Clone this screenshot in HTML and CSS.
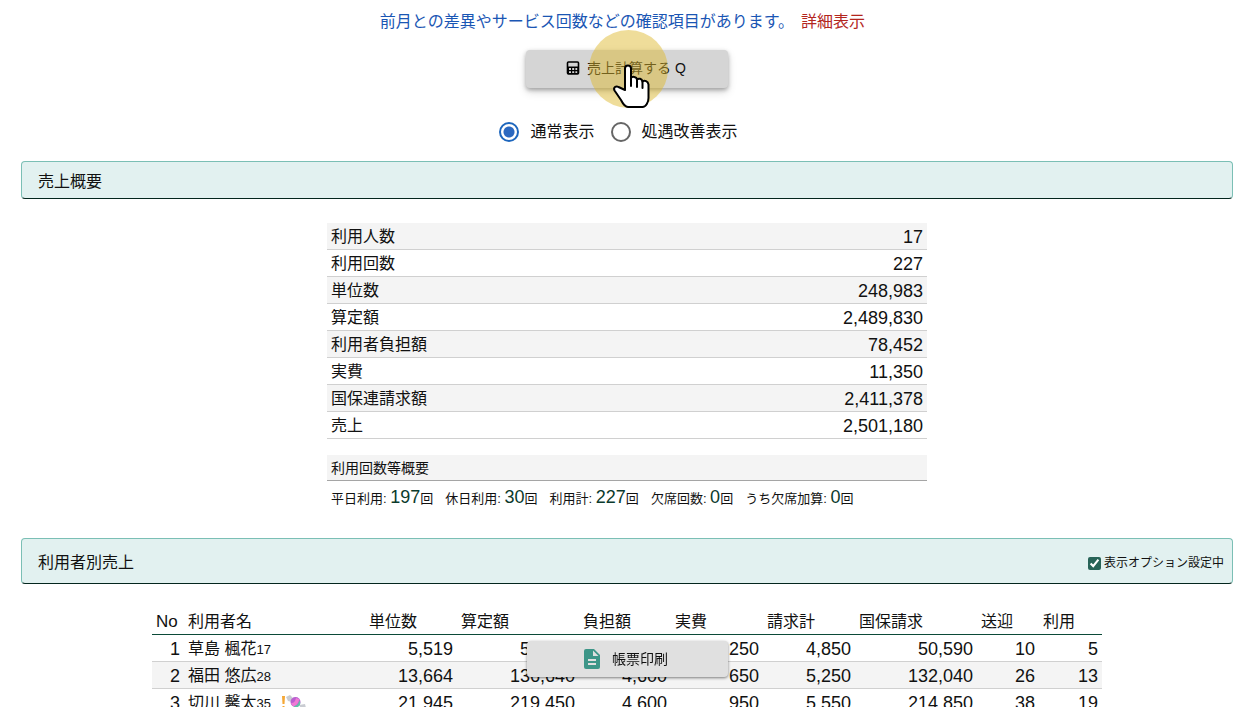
FILE: index.html
```html
<!DOCTYPE html>
<html lang="ja">
<head>
<meta charset="utf-8">
<meta name="viewport" content="width=device-width, initial-scale=1">
<title>売上計算</title>
<link rel="stylesheet" href="styles.css">
</head>
<body>
<main class="page">
  <div class="notice">
    <span class="notice-text">前月との差異やサービス回数などの確認項目があります。</span>
    <a class="notice-link" href="#detail">詳細表示</a>
  </div>

  <div class="calc">
    <button class="btn btn-calc" type="button">
      <svg class="icon-calc" viewBox="0 0 14 14" aria-hidden="true">
        <rect x="1.500" y="1" width="11" height="12" rx="1" fill="#d5d5d5" stroke="#000" stroke-width="1.600"/>
        <path d="M1.500 5.500h11V13h-11z" fill="#000"/>
        <path d="M3 7h2v2H3zM6.200 7h2v2h-2zM9.400 7h1.800v2H9.400zM3 10.300h2v1.700H3zM6.200 10.300h2V12h-2zM9.400 10.300h1.800V12H9.400z" fill="#d5d5d5"/>
      </svg>
      <span>売上計算する Q</span>
    </button>
    <span class="spot" aria-hidden="true"></span>
    <svg class="hand" viewBox="0 0 38 44" aria-hidden="true">
      <path d="M13 26V4.500a3 3 0 0 1 6 0V14c1-1.800 5.500-1.500 6 1.500 1.500-1.500 5-1 5.500 2 2-1.500 5.500-.5 6 3V34c0 4-2.500 9-6 9H16c-3 0-5-3-7-7L2.500 26.500c-1.500-3 1.500-5 4-3.500z" fill="#fff" stroke="#000" stroke-width="2" stroke-linejoin="round"/>
      <path d="M19 13v9M25 15v8M30.500 17v7" fill="none" stroke="#000" stroke-width="2" stroke-linecap="round"/>
    </svg>
  </div>

  <div class="modes" role="radiogroup" aria-label="表示">
    <label class="mode"><input class="radio" type="radio" name="mode" checked>通常表示</label>
    <label class="mode"><input class="radio" type="radio" name="mode">処遇改善表示</label>
  </div>

  <section>
    <header class="bar"><h2 class="bar-title">売上概要</h2></header>
    <table class="grid summary">
      <tbody>
        <tr><th scope="row">利用人数</th><td>17</td></tr>
        <tr><th scope="row">利用回数</th><td>227</td></tr>
        <tr><th scope="row">単位数</th><td>248,983</td></tr>
        <tr><th scope="row">算定額</th><td>2,489,830</td></tr>
        <tr><th scope="row">利用者負担額</th><td>78,452</td></tr>
        <tr><th scope="row">実費</th><td>11,350</td></tr>
        <tr><th scope="row">国保連請求額</th><td>2,411,378</td></tr>
        <tr><th scope="row">売上</th><td>2,501,180</td></tr>
      </tbody>
    </table>
    <div class="counts">
      <h3 class="counts-title">利用回数等概要</h3>
      <ul class="counts-list">
        <li>平日利用: <b>197</b>回</li>
        <li>休日利用: <b>30</b>回</li>
        <li>利用計: <b>227</b>回</li>
        <li>欠席回数: <b>0</b>回</li>
        <li>うち欠席加算: <b>0</b>回</li>
      </ul>
    </div>
  </section>

  <section>
    <header class="bar bar-tall">
      <h2 class="bar-title">利用者別売上</h2>
      <label class="option"><input class="check" type="checkbox" checked>表示オプション設定中</label>
    </header>
    <table class="grid users">
      <colgroup>
        <col class="c-no"><col class="c-name"><col class="c-mid"><col class="c-wide"><col class="c-mid"><col class="c-mid"><col class="c-mid"><col class="c-wide"><col class="c-small"><col class="c-last">
      </colgroup>
      <thead>
        <tr><th>No</th><th>利用者名</th><th>単位数</th><th>算定額</th><th>負担額</th><th>実費</th><th>請求計</th><th>国保請求</th><th>送迎</th><th>利用</th></tr>
      </thead>
      <tbody>
        <tr><td>1</td><td class="name">草島 楓花<small>17</small></td><td>5,519</td><td>55,190</td><td>4,600</td><td>250</td><td>4,850</td><td>50,590</td><td>10</td><td>5</td></tr>
        <tr><td>2</td><td class="name">福田 悠広<small>28</small></td><td>13,664</td><td>136,640</td><td>4,600</td><td>650</td><td>5,250</td><td>132,040</td><td>26</td><td>13</td></tr>
        <tr><td>3</td><td class="name">切川 馨太<small>35</small><svg class="candy" viewBox="0 0 26 16" aria-hidden="true">
          <path d="M1 2h3l-.5 8h-2zM1.500 12h2v2h-2z" fill="#f5a836"/>
          <path d="M5 3l4-2 3 3-1 4-4-1zM18 11l6-1 1 4-4 2z" fill="#c9ccd2"/>
          <circle cx="14.500" cy="8" r="5" fill="#b85fd0"/>
          <path d="M10 9c3 0 4-1 5-5l3 1c0 4-3 7-6 7.500z" fill="#f07bd5"/>
          <path d="M12.500 12.500c4-1 5-3 6-6 2 3 0 7-4 7z" fill="#5fc4a4"/>
        </svg></td><td>21,945</td><td>219,450</td><td>4,600</td><td>950</td><td>5,550</td><td>214,850</td><td>38</td><td>19</td></tr>
      </tbody>
    </table>
  </section>

  <button class="btn btn-print" type="button">
    <svg class="icon-doc" viewBox="0 0 16 20" aria-hidden="true">
      <path d="M2 0h8l6 6v12a2 2 0 0 1-2 2H2a2 2 0 0 1-2-2V2a2 2 0 0 1 2-2z" fill="#3d9688"/>
      <path d="M9 1.500V7h5.500zM4 10h8v2H4zM4 14h8v2H4z" fill="#e0e0e0"/>
    </svg>
    <span>帳票印刷</span>
  </button>
</main>
</body>
</html>
```
FILE: styles.css
```css
* { box-sizing: border-box; }

html { scrollbar-width: none; }

body {
  margin: 0;
  background: #fff;
  color: #111;
  font: 16px/24px "Liberation Sans", "Noto Sans CJK JP", sans-serif;
}

.page {
  padding: 10px 24px 0 21px;
}

.notice {
  display: flex;
  justify-content: center;
  gap: 7px;
  padding-right: 9px;
}
.notice-text { color: #1a56b4; }
.notice-link { color: #b3261e; text-decoration: none; }

.calc {
  position: relative;
  width: 202px;
  margin: 16px auto 0;
}

.btn {
  display: flex;
  align-items: center;
  justify-content: center;
  border: 0;
  border-radius: 4px;
  color: #111;
  font: inherit;
  font-size: 14px;
}
.btn-calc {
  width: 100%;
  height: 38px;
  gap: 7px;
  padding: 0 8px 3px 6px;
  background: #d5d5d5;
  box-shadow: 0 2px 4px rgba(0, 0, 0, .3), 0 4px 10px rgba(0, 0, 0, .14);
}
.icon-calc { width: 14px; height: 14px; }

.spot {
  position: absolute;
  top: -20px;
  left: 63px;
  width: 79px;
  height: 78px;
  border-radius: 50%;
  background: rgba(221, 184, 44, .48);
  pointer-events: none;
}
.hand {
  position: absolute;
  top: 14px;
  left: 86px;
  width: 38px;
  height: 44px;
  pointer-events: none;
}

.modes {
  display: flex;
  justify-content: center;
  gap: 16px;
  margin: 32px 0 17px;
  padding-right: 17px;
}
.mode {
  display: flex;
  align-items: center;
  gap: 11px;
}
.radio {
  appearance: none;
  width: 20px;
  height: 20px;
  margin: 0;
  border: 2px solid #666;
  border-radius: 50%;
}
.radio:checked {
  border-color: #1d66bd;
  background: radial-gradient(circle, #2b68c0 5px, #fff 6px);
}

.bar {
  display: flex;
  align-items: center;
  justify-content: space-between;
  height: 38px;
  padding: 4px 8px 0 16px;
  border: 1px solid #7bbfb5;
  border-bottom-color: #03261d;
  border-radius: 4px;
  background: #e2f1f0;
}
.bar-tall { height: 46px; }
.bar-title {
  margin: 0;
  font-size: 16px;
  font-weight: 400;
}
.option {
  display: flex;
  align-items: center;
  gap: 3px;
  font-size: 12px;
}
.check {
  width: 13px;
  height: 13px;
  margin: 0;
  accent-color: #286458;
}

.grid {
  width: 100%;
  margin: 24px auto 0;
  border-collapse: separate;
  border-spacing: 0;
  table-layout: fixed;
}
.grid th,
.grid td {
  height: 27px;
  padding: 2px 4px 0;
  border-bottom: 1px solid #d0d0d0;
  font-weight: 400;
}
.grid th { text-align: left; }
.grid td { font-size: 18px; text-align: right; }

.summary { max-width: 600px; }
.summary tr:nth-child(odd) { background: #f4f4f4; }

.counts {
  max-width: 600px;
  margin: 16px auto 27px;
}
.counts-title {
  margin: 0;
  padding: 1px 4px 0;
  border-bottom: 1px solid #a5a5a5;
  background: #f4f4f4;
  font-size: 14px;
  font-weight: 400;
}
.counts-list {
  display: flex;
  gap: 12px;
  margin: 4px 0 0;
  padding: 0 4px;
  list-style: none;
  font-size: 13px;
}
.counts-list b {
  color: #0b3a2c;
  font-size: 18px;
  font-weight: 400;
}

.users { max-width: 950px; }
.users thead th { border-bottom-color: #0b4a38; }
.users thead th:first-child { font-size: 17px; }
.users tbody tr:nth-child(even) { background: #f4f4f4; }
.users tbody td { line-height: 20px; }
.users td.name { font-size: 16px; text-align: left; white-space: nowrap; }
.users small { font-size: 13px; line-height: 1; }
.c-no { width: 32px; }
.c-name { width: auto; }
.c-mid { width: 92px; }
.c-wide { width: 122px; }
.c-small { width: 62px; }
.c-last { width: 63px; }
.candy {
  width: 26px;
  height: 16px;
  margin-left: 10px;
  vertical-align: text-top;
}

.btn-print {
  position: fixed;
  bottom: 30px;
  left: calc(50% - 102px);
  width: 201px;
  height: 36px;
  gap: 12px;
  padding: 0 7px 0 5px;
  background: #e0e0e0;
  box-shadow: 0 1px 3px rgba(0, 0, 0, .5);
}
.icon-doc { width: 16px; height: 20px; }
```
